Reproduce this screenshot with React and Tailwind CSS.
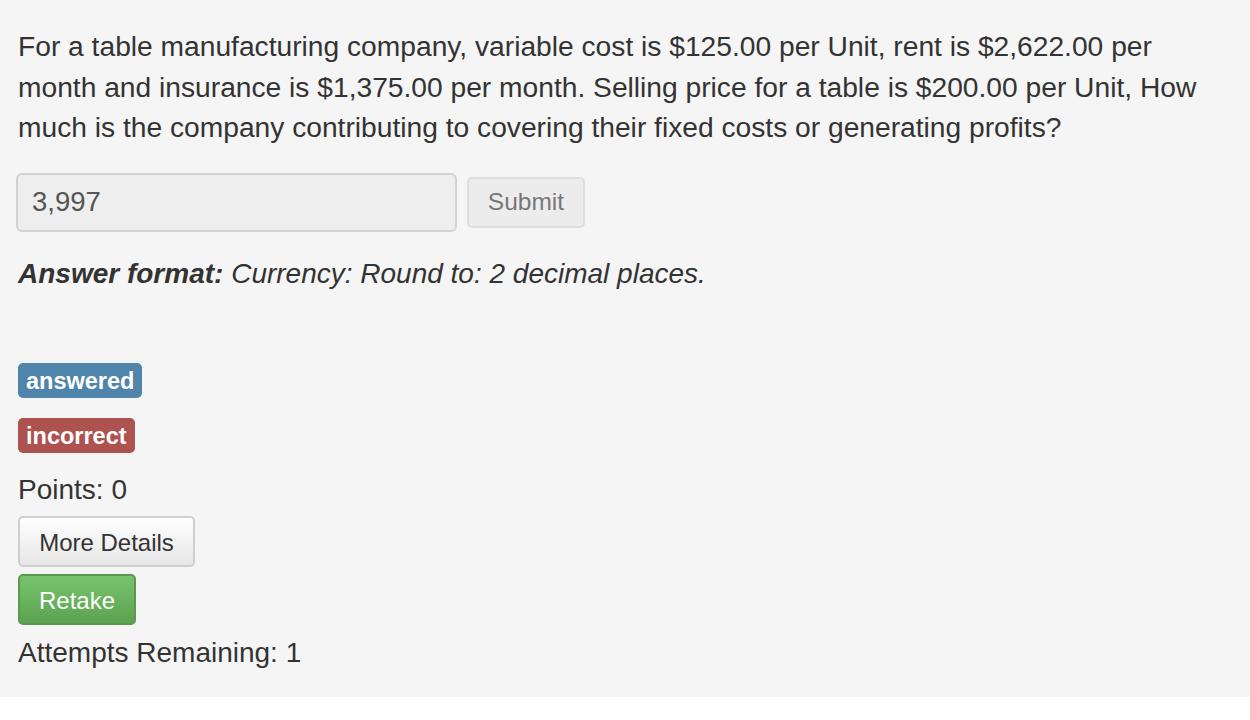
export default function App() {
  return (
    <div className="w-[1250px] h-[720px] bg-white font-['Liberation_Sans',Arial,sans-serif] text-[#333]">
      <div className="h-[697px] bg-[#f5f5f5] px-[18px] pt-[26px]">
        <p className="text-[28.2px] leading-[40.5px] whitespace-nowrap">
          For a table manufacturing company, variable cost is $125.00 per Unit, rent is $2,622.00 per
          <br />
          month and insurance is $1,375.00 per month. Selling price for a table is $200.00 per Unit, How
          <br />
          much is the company contributing to covering their fixed costs or generating profits?
        </p>

        <div className="mt-[25px] -ml-[2px] flex items-center gap-[10px]">
          <div className="w-[441px] h-[59px] rounded-[6px] border-2 border-[#d2d2d2] bg-[#eeeeee] px-[14px] flex items-center text-[27.5px] text-[#555]">
            3,997
          </div>
          <button className="w-[118px] h-[51px] rounded-[5px] border-2 border-[#dedede] bg-[#ececec] text-[24.5px] text-[#777]">
            Submit
          </button>
        </div>

        <p className="mt-[22px] text-[28px] italic leading-[40px]">
          <b>Answer format:</b> Currency: Round to: 2 decimal places.
        </p>

        <div className="mt-[69px] flex flex-col items-start">
          <span className="h-[35px] px-[8px] rounded-[5px] bg-[#4f84ab] text-white font-bold text-[23.5px] leading-[37px]">
            answered
          </span>
          <span className="mt-[20px] h-[35px] px-[8px] rounded-[5px] bg-[#ad524e] text-white font-bold text-[23.5px] leading-[37px]">
            incorrect
          </span>
          <div className="mt-[19px] text-[28px] leading-[36px]">Points: 0</div>
          <button className="mt-[8px] w-[177px] h-[51px] pt-[3px] rounded-[5px] border-2 border-[#cfcfcf] bg-gradient-to-b from-white to-[#e6e6e6] text-[24px] text-[#333]">
            More Details
          </button>
          <button className="mt-[7px] w-[118px] h-[51px] pt-[3px] rounded-[5px] border-2 border-[#5a9a4f] bg-gradient-to-b from-[#78c46e] to-[#5ca250] text-[24px] text-white">
            Retake
          </button>
          <div className="mt-[10px] text-[28px] leading-[36px]">Attempts Remaining: 1</div>
        </div>
      </div>
    </div>
  );
}
